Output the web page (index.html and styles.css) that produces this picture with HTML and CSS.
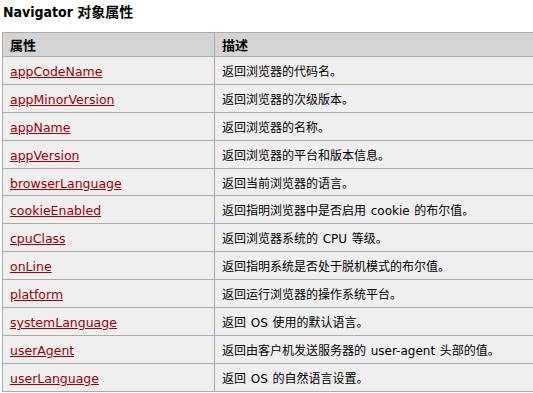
FILE: index.html
```html
<!DOCTYPE html>
<html>
<head>
<meta charset="utf-8">
<link rel="stylesheet" href="styles.css">
</head>
<body>
<h2 class="title">Navigator 对象属性</h2>
<table class="props">
<thead>
<tr><th class="c1">属性</th><th>描述</th></tr>
</thead>
<tbody>
<tr><td><a href="#">appCodeName</a></td><td>返回浏览器的代码名。</td></tr>
<tr><td><a href="#">appMinorVersion</a></td><td>返回浏览器的次级版本。</td></tr>
<tr><td><a href="#">appName</a></td><td>返回浏览器的名称。</td></tr>
<tr><td><a href="#">appVersion</a></td><td>返回浏览器的平台和版本信息。</td></tr>
<tr><td><a href="#">browserLanguage</a></td><td>返回当前浏览器的语言。</td></tr>
<tr><td><a href="#">cookieEnabled</a></td><td>返回指明浏览器中是否启用 <span class="en">cookie</span> 的布尔值。</td></tr>
<tr><td><a href="#">cpuClass</a></td><td>返回浏览器系统的 <span class="en">CPU</span> 等级。</td></tr>
<tr><td><a href="#">onLine</a></td><td>返回指明系统是否处于脱机模式的布尔值。</td></tr>
<tr><td><a href="#">platform</a></td><td>返回运行浏览器的操作系统平台。</td></tr>
<tr><td><a href="#">systemLanguage</a></td><td>返回 <span class="en">OS</span> 使用的默认语言。</td></tr>
<tr><td><a href="#">userAgent</a></td><td>返回由客户机发送服务器的 <span class="en">user-agent</span> 头部的值。</td></tr>
<tr><td><a href="#">userLanguage</a></td><td>返回 <span class="en">OS</span> 的自然语言设置。</td></tr>
</tbody>
</table>
</body>
</html>
```
FILE: styles.css
```css
html { overflow: hidden; }
body {
  margin: 0;
  padding: 0 0 0 2px;
  background: #fff;
  font-family: "DejaVu Sans", Verdana, "Noto Sans CJK SC", sans-serif;
  color: #000;
}
.title {
  margin: 0;
  padding: 3px 0 0 1px;
  height: 32px;
  box-sizing: border-box;
  font-size: 14px;
  font-weight: bold;
  line-height: 18px;
  font-family: "DejaVu Sans Condensed", "Noto Sans", "Noto Sans CJK SC", sans-serif;
}
.props {
  border-collapse: collapse;
  width: 531px;
  font-size: 12px;
}
.props th, .props td {
  border: 1px solid #aaa;
  text-align: left;
  vertical-align: middle;
}
.props th:last-child, .props td:last-child {
  border-right: 0;
}
.props th {
  background: #d4d4d4;
  height: 23px;
  padding: 0 6px 0 7px;
  font-weight: bold;
  font-family: "Noto Sans CJK SC", sans-serif;
  font-size: 13px;
}
.props th.c1 { width: 198px; }
.props td {
  background: #efefef;
  height: 26.9px;
  padding: 0 6px 0 7px;
  font-family: "Noto Sans CJK SC", sans-serif;
  font-size: 12px;
}
.props td a {
  color: #900;
  text-decoration: underline;
  font-family: "DejaVu Sans", Verdana, sans-serif;
  font-size: 12.5px;
}
.props .en {
  font-family: "DejaVu Sans", Verdana, sans-serif;
  padding: 0 2px;
}
```
